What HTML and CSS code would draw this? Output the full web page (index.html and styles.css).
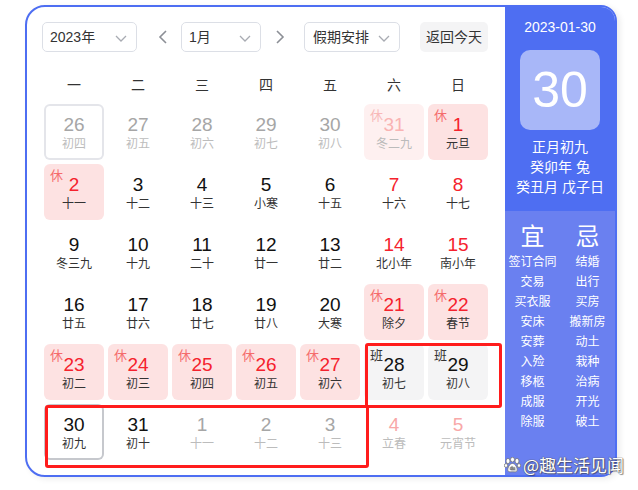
FILE: index.html
```html
<html>
<head>
	<meta charset="utf-8">
	<title>万年历</title>
	<link rel="stylesheet" href="styles.css">
</head>
<body>
<div class="calendar">
	<div class="main">
		<div class="toolbar">
			<div class="select year">2023年
				<svg class="caret" width="12" height="7" viewBox="0 0 12 7"><polyline points="1,1 6,6 11,1" fill="none" stroke="#a8abb2" stroke-width="1.3"/></svg>
			</div>
			<span class="arrow prev"><svg width="9" height="14" viewBox="0 0 9 14"><polyline points="8,1 2,7 8,13" fill="none" stroke="#8c8f96" stroke-width="1.6"/></svg></span>
			<div class="select month">1月
				<svg class="caret" width="12" height="7" viewBox="0 0 12 7"><polyline points="1,1 6,6 11,1" fill="none" stroke="#a8abb2" stroke-width="1.3"/></svg>
			</div>
			<span class="arrow next"><svg width="9" height="14" viewBox="0 0 9 14"><polyline points="1,1 7,7 1,13" fill="none" stroke="#8c8f96" stroke-width="1.6"/></svg></span>
			<div class="select holiday">假期安排
				<svg class="caret" width="12" height="7" viewBox="0 0 12 7"><polyline points="1,1 6,6 11,1" fill="none" stroke="#a8abb2" stroke-width="1.3"/></svg>
			</div>
			<div class="today-btn">返回今天</div>
		</div>

		<div class="weekdays">
			<span>一</span><span>二</span><span>三</span><span>四</span><span>五</span><span>六</span><span>日</span>
		</div>

		<div class="days">
			<div class="day other outlined"><b>26</b><i>初四</i></div>
			<div class="day other"><b>27</b><i>初五</i></div>
			<div class="day other"><b>28</b><i>初六</i></div>
			<div class="day other"><b>29</b><i>初七</i></div>
			<div class="day other"><b>30</b><i>初八</i></div>
			<div class="day rest faded"><em>休</em><b>31</b><i>冬二九</i></div>
			<div class="day rest"><em>休</em><b>1</b><i>元旦</i></div>

			<div class="day rest"><em>休</em><b>2</b><i>十一</i></div>
			<div class="day"><b>3</b><i>十二</i></div>
			<div class="day"><b>4</b><i>十三</i></div>
			<div class="day"><b>5</b><i>小寒</i></div>
			<div class="day"><b>6</b><i>十五</i></div>
			<div class="day weekend"><b>7</b><i>十六</i></div>
			<div class="day weekend"><b>8</b><i>十七</i></div>

			<div class="day"><b>9</b><i>冬三九</i></div>
			<div class="day"><b>10</b><i>十九</i></div>
			<div class="day"><b>11</b><i>二十</i></div>
			<div class="day"><b>12</b><i>廿一</i></div>
			<div class="day"><b>13</b><i>廿二</i></div>
			<div class="day weekend"><b>14</b><i>北小年</i></div>
			<div class="day weekend"><b>15</b><i>南小年</i></div>

			<div class="day"><b>16</b><i>廿五</i></div>
			<div class="day"><b>17</b><i>廿六</i></div>
			<div class="day"><b>18</b><i>廿七</i></div>
			<div class="day"><b>19</b><i>廿八</i></div>
			<div class="day"><b>20</b><i>大寒</i></div>
			<div class="day rest"><em>休</em><b>21</b><i>除夕</i></div>
			<div class="day rest"><em>休</em><b>22</b><i>春节</i></div>

			<div class="day rest"><em>休</em><b>23</b><i>初二</i></div>
			<div class="day rest"><em>休</em><b>24</b><i>初三</i></div>
			<div class="day rest"><em>休</em><b>25</b><i>初四</i></div>
			<div class="day rest"><em>休</em><b>26</b><i>初五</i></div>
			<div class="day rest"><em>休</em><b>27</b><i>初六</i></div>
			<div class="day work"><em>班</em><b>28</b><i>初七</i></div>
			<div class="day work"><em>班</em><b>29</b><i>初八</i></div>

			<div class="day selected"><b>30</b><i>初九</i></div>
			<div class="day"><b>31</b><i>初十</i></div>
			<div class="day other"><b>1</b><i>十一</i></div>
			<div class="day other"><b>2</b><i>十二</i></div>
			<div class="day other"><b>3</b><i>十三</i></div>
			<div class="day other weekend"><b>4</b><i>立春</i></div>
			<div class="day other weekend"><b>5</b><i>元宵节</i></div>
		</div>
	</div>

	<div class="side">
		<div class="side-top">
			<div class="side-date">2023-01-30</div>
			<div class="big-day">30</div>
			<div class="lunar">正月初九</div>
			<div class="lunar">癸卯年 兔</div>
			<div class="lunar">癸丑月 戊子日</div>
		</div>
		<div class="side-bottom">
			<div class="col">
				<div class="col-title">宜</div>
				<div>签订合同</div>
				<div>交易</div>
				<div>买衣服</div>
				<div>安床</div>
				<div>安葬</div>
				<div>入殓</div>
				<div>移柩</div>
				<div>成服</div>
				<div>除服</div>
			</div>
			<div class="col">
				<div class="col-title">忌</div>
				<div>结婚</div>
				<div>出行</div>
				<div>买房</div>
				<div>搬新房</div>
				<div>动土</div>
				<div>栽种</div>
				<div>治病</div>
				<div>开光</div>
				<div>破土</div>
			</div>
		</div>
	</div>
</div>

<div class="mark mark-work"></div>
<div class="mark mark-week"></div>

<div class="watermark">
	<svg width="17" height="16" viewBox="0 0 17 16">
		<ellipse cx="4" cy="4" rx="2" ry="2.6" fill="#fff" stroke="#777" stroke-width="0.8"/>
		<ellipse cx="8.5" cy="2.6" rx="2" ry="2.4" fill="#fff" stroke="#777" stroke-width="0.8"/>
		<ellipse cx="13" cy="4" rx="2" ry="2.6" fill="#fff" stroke="#777" stroke-width="0.8"/>
		<ellipse cx="2" cy="8.5" rx="1.6" ry="2" fill="#fff" stroke="#777" stroke-width="0.8"/>
		<ellipse cx="15" cy="8.5" rx="1.6" ry="2" fill="#fff" stroke="#777" stroke-width="0.8"/>
		<path d="M8.5 6.5 C5.5 6.5 3.5 11 3.8 13.2 C4.2 15.5 7 14.8 8.5 14.8 C10 14.8 12.8 15.5 13.2 13.2 C13.5 11 11.5 6.5 8.5 6.5 Z" fill="#fff" stroke="#777" stroke-width="0.8"/>
		<text x="8.5" y="13.4" font-size="4.5" text-anchor="middle" fill="#777" font-family="Liberation Sans, sans-serif">du</text>
	</svg>
	<span>@趣生活见闻</span>
</div>
</body>
</html>
```

FILE: styles.css
```css
* { box-sizing: border-box; }
body {
	margin: 0;
	background: #fff;
	font-family: "Liberation Sans", "Noto Sans CJK SC", sans-serif;
	color: #222;
}

.calendar {
	margin: 5px 0 0 25px;
	width: 592px;
	height: 472px;
	display: flex;
	border: 2px solid #4e6ef2;
	border-radius: 20px 16px 16px 20px;
	overflow: hidden;
	box-shadow: 3px 2px 6px rgba(0, 0, 0, 0.08);
}

.main {
	width: 478px;
	padding: 15px 17px 0 15px;
}

.toolbar {
	display: flex;
	align-items: center;
	height: 30px;
	font-size: 14px;
}
.select {
	position: relative;
	height: 30px;
	line-height: 28px;
	border: 1px solid #dcdfe6;
	border-radius: 5px;
	padding-left: 7px;
	color: #333;
}
.select .caret {
	position: absolute;
	right: 9px;
	top: 12px;
}
.select.year { width: 95px; }
.select.month { width: 80px; margin-left: 11px; }
.select.holiday { width: 96px; margin-left: 16px; padding-left: 8px; }
.arrow {
	display: flex;
	justify-content: center;
	width: 16px;
}
.arrow.prev { margin-left: 17px; }
.arrow.next { margin-left: 11px; }
.today-btn {
	margin-left: auto;
	width: 68px;
	height: 30px;
	line-height: 30px;
	text-align: center;
	background: #f4f4f5;
	border-radius: 5px;
	color: #333;
}

.weekdays {
	display: grid;
	grid-template-columns: repeat(7, 60px);
	column-gap: 4px;
	margin: 23px 0 0 2px;
	height: 20px;
	line-height: 20px;
	font-size: 14px;
	text-align: center;
	color: #333;
}

.days {
	display: grid;
	grid-template-columns: repeat(7, 60px);
	grid-auto-rows: 56px;
	gap: 4px;
	margin: 9px 0 0 2px;
}
.day {
	position: relative;
	border-radius: 6px;
	text-align: center;
	padding-top: 11px;
}
.day b {
	display: block;
	font-weight: normal;
	font-size: 19px;
	line-height: 20px;
	color: #111;
}
.day i {
	display: block;
	font-style: normal;
	font-size: 12px;
	line-height: 18px;
	color: #333;
}
.day em {
	position: absolute;
	left: 6px;
	top: 4px;
	font-style: normal;
	font-size: 13px;
	line-height: 16px;
}

.day.other b { color: #a6a6a6; }
.day.other i { color: #bcbcbc; }
.day.weekend b { color: #f5222d; }
.day.other.weekend b { color: #f8a8a8; }

.day.rest { background: #fde2e2; }
.day.rest b { color: #f5222d; }
.day.rest em { color: #f56c6c; }
.day.rest.faded { background: #fef0f0; }
.day.rest.faded b { color: #f9b3b3; }
.day.rest.faded i { color: #bbb; }
.day.rest.faded em { color: #f8b9b9; }

.day.work { background: #f4f4f5; }
.day.work em { color: #333; }

.day.outlined { box-shadow: inset 0 0 0 2px #e4e5ea; }
.day.selected { box-shadow: inset 0 0 0 2px #c6c8cd; }

.side {
	width: 110px;
	display: flex;
	flex-direction: column;
	color: #fff;
	text-align: center;
}
.side-top {
	background: #4e6ef2;
	padding: 10px 0 14px;
	height: 204px;
}
.side-date {
	font-size: 14px;
	line-height: 20px;
}
.big-day {
	width: 80px;
	height: 80px;
	margin: 13px auto 7px;
	background: #a8b7f8;
	border-radius: 10px;
	font-size: 50px;
	line-height: 80px;
}
.lunar {
	font-size: 14px;
	line-height: 20px;
}
.side-bottom {
	flex: 1;
	background: #6a80f0;
	display: flex;
	padding-top: 11px;
}
.side-bottom .col {
	width: 55px;
	font-size: 12px;
	line-height: 20px;
}
.side-bottom .col-title {
	font-size: 24px;
	line-height: 30px;
}

.mark {
	position: absolute;
	border: 3px solid #ff1c1c;
	border-radius: 3px;
}
.mark-work {
	left: 365px;
	top: 343px;
	width: 137px;
	height: 65px;
}
.mark-week {
	left: 45px;
	top: 405px;
	width: 324px;
	height: 63px;
}

.watermark {
	position: absolute;
	left: 504px;
	top: 455px;
	display: flex;
	align-items: center;
	gap: 2px;
	font-family: "Noto Sans CJK SC", sans-serif;
	font-size: 17px;
	line-height: 20px;
	color: #fff;
	text-shadow: 0 0 1px #555, 0 0 1px #555, 1px 1px 1px rgba(0, 0, 0, 0.4);
}
```
